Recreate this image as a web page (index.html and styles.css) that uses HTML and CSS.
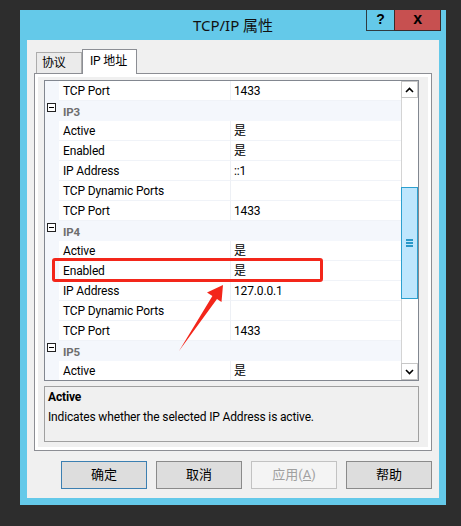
FILE: index.html
```html
<!DOCTYPE html>
<html>
<head>
<meta charset="utf-8">
<link rel="stylesheet" href="styles.css">
</head>
<body>
<div class="window">
  <div class="titlebar">
    <div></div>
    <div class="title">TCP/IP 属性</div>
    <div class="controls">
      <div class="btn-help">?</div>
      <div class="btn-close">x</div>
    </div>
  </div>
  <div class="client">
    <div class="tabs">
      <div class="tab">协议</div>
      <div class="tab active">IP 地址</div>
    </div>
    <div class="panel">
      <div class="grid">
        <div class="rows">
          <div class="row"><div class="margin"></div><div class="name">TCP Port</div><div class="value">1433</div></div>
          <div class="row cat"><div class="margin"><span class="minus"></span></div><div class="catname">IP3</div></div>
          <div class="row"><div class="margin"></div><div class="name">Active</div><div class="value">是</div></div>
          <div class="row"><div class="margin"></div><div class="name">Enabled</div><div class="value">是</div></div>
          <div class="row"><div class="margin"></div><div class="name">IP Address</div><div class="value">::1</div></div>
          <div class="row"><div class="margin"></div><div class="name">TCP Dynamic Ports</div><div class="value"></div></div>
          <div class="row"><div class="margin"></div><div class="name">TCP Port</div><div class="value">1433</div></div>
          <div class="row cat"><div class="margin"><span class="minus"></span></div><div class="catname">IP4</div></div>
          <div class="row"><div class="margin"></div><div class="name">Active</div><div class="value">是</div></div>
          <div class="row"><div class="margin"></div><div class="name">Enabled</div><div class="value">是</div></div>
          <div class="row"><div class="margin"></div><div class="name">IP Address</div><div class="value">127.0.0.1</div></div>
          <div class="row"><div class="margin"></div><div class="name">TCP Dynamic Ports</div><div class="value"></div></div>
          <div class="row"><div class="margin"></div><div class="name">TCP Port</div><div class="value">1433</div></div>
          <div class="row cat"><div class="margin"><span class="minus"></span></div><div class="catname">IP5</div></div>
          <div class="row"><div class="margin"></div><div class="name">Active</div><div class="value">是</div></div>
        </div>
        <div class="scrollbar">
          <div class="sb-btn">
            <svg width="9" height="6" viewBox="0 0 9 6"><polyline points="1,5 4.5,1.5 8,5" fill="none" stroke="#000" stroke-width="1.6"/></svg>
          </div>
          <div class="sb-track">
            <div class="thumb" style="margin-top:89px;height:112px">
              <span class="grip"></span><span class="grip"></span><span class="grip"></span>
            </div>
          </div>
          <div class="sb-btn">
            <svg width="9" height="6" viewBox="0 0 9 6"><polyline points="1,1 4.5,4.5 8,1" fill="none" stroke="#000" stroke-width="1.6"/></svg>
          </div>
        </div>
      </div>
      <div class="desc">
        <div class="desc-title">Active</div>
        <div class="desc-text">Indicates whether the selected IP Address is active.</div>
      </div>
    </div>
    <div class="buttons">
      <div class="button default">确定</div>
      <div class="button">取消</div>
      <div class="button disabled">应用(<u>A</u>)</div>
      <div class="button">帮助</div>
    </div>
  </div>
</div>
<div class="mark-box"></div>
<svg class="mark-arrow" width="461" height="526" viewBox="0 0 461 526">
  <polygon points="223,285 207,292.5 212.4,296 179,351 217,299 221.5,302" fill="#f3261a"/>
</svg>
</body>
</html>
```
FILE: styles.css
```css
* { box-sizing: border-box; }
html, body { margin: 0; padding: 0; }
body {
  background: #2d2d2d;
  width: 461px;
  height: 526px;
  padding: 10px 0 0 20px;
  font-family: Roboto, "Noto Sans CJK SC", sans-serif;
  font-size: 12px;
  letter-spacing: -0.15px;
  color: #000;
  position: relative;
  overflow: hidden;
}
.window {
  width: 426px;
  height: 495px;
  background: #64c9e9;
  display: flex;
  flex-direction: column;
}
.titlebar {
  height: 30px;
  display: grid;
  grid-template-columns: 1fr auto 1fr;
  align-items: start;
}
.title {
  font-size: 15px;
  line-height: 30px;
  color: #111;
  letter-spacing: 0;
  font-family: "Noto Sans", "Noto Sans CJK SC", sans-serif;
}
.controls {
  display: flex;
  justify-content: flex-end;
  padding-right: 5px;
}
.btn-help {
  width: 28px;
  height: 21px;
  border: 1px solid #2f3b40;
  border-top: none;
  border-right: none;
  text-align: center;
  font-weight: bold;
  font-size: 14px;
  line-height: 19px;
  font-family: "Liberation Sans", sans-serif;
}
.btn-close {
  width: 47px;
  height: 21px;
  background: #c75050;
  border: 1px solid #3a2a2a;
  border-top: none;
  text-align: center;
  font-weight: bold;
  font-size: 16px;
  line-height: 17px;
  font-family: "Liberation Sans", sans-serif;
}
.client {
  margin: 0 7px;
  height: 458px;
  background: #f0f0f0;
  padding-top: 9px;
}
.tabs {
  display: flex;
  align-items: flex-end;
  padding-left: 9px;
}
.tab {
  height: 21px;
  width: 46px;
  border: 1px solid #acacac;
  border-bottom: none;
  background: #ebebeb;
  padding-left: 5px;
  line-height: 20px;
  font-size: 12px;
}
.tab.active {
  width: 55px;
  height: 25px;
  margin-bottom: -1px;
  background: #fff;
  border-color: #8c8e94;
  padding-left: 7px;
  line-height: 22px;
  position: relative;
  z-index: 1;
}
.panel {
  margin-left: 7px;
  width: 398px;
  height: 378px;
  border: 1px solid #8c8e94;
  background: #f0f0f0;
  box-shadow: inset 0 0 0 3px #fff;
  padding: 6px 0 0 9px;
}
.grid {
  width: 375px;
  height: 301px;
  border: 1px solid #828790;
  background: #fff;
  display: flex;
  overflow: hidden;
}
.rows {
  flex: 1;
  display: flex;
  flex-direction: column;
}
.row {
  height: 20px;
  flex: none;
  display: grid;
  grid-template-columns: 14px 171px 1fr;
}
.margin {
  background: #f4f7fc;
}
.name {
  padding: 1px 0 0 4px;
  line-height: 18px;
  border-bottom: 1px solid #f0f3f8;
  white-space: nowrap;
}
.value {
  padding: 1px 0 0 3px;
  line-height: 18px;
  border-left: 1px solid #edf0f5;
  border-bottom: 1px solid #f0f3f8;
}
.row.cat {
  background: #f4f7fc;
}
.catname {
  grid-column: 2 / 4;
  padding-left: 4px;
  line-height: 22px;
  font-weight: bold;
  color: #6e6e6e;
  font-size: 11.5px;
}
.minus {
  display: block;
  width: 9px;
  height: 9px;
  margin: 2px 0 0 2px;
  border: 1px solid #222;
  background: #fff;
  position: relative;
}
.minus::after {
  content: "";
  position: absolute;
  left: 1px;
  top: 3px;
  width: 5px;
  height: 1px;
  background: #000;
}
.scrollbar {
  width: 17px;
  flex: none;
  display: flex;
  flex-direction: column;
  background: #fff;
}
.sb-btn {
  height: 17px;
  flex: none;
  border: 1px solid #c7c7c7;
  background: #fff;
  display: flex;
  align-items: center;
  justify-content: center;
}
.sb-track {
  flex: 1;
  border-left: 1px solid #d4d4d4;
}
.thumb {
  margin-left: -1px;
  background: #bee6fd;
  border: 1px solid #2ca0cf;
  display: flex;
  flex-direction: column;
  align-items: center;
  justify-content: center;
  gap: 1px;
}
.grip {
  display: block;
  width: 7px;
  height: 2px;
  background: #2a98c8;
}
.desc {
  margin-top: 5px;
  width: 375px;
  height: 56px;
  border: 1px solid #a0a0a0;
  background: #f0f0f0;
  padding: 1px 0 0 3px;
}
.desc-title {
  font-weight: bold;
  line-height: 18px;
}
.desc-text {
  margin-top: 2px;
  line-height: 18px;
}
.buttons {
  display: flex;
  justify-content: flex-end;
  gap: 9px;
  padding-right: 7px;
  margin-top: 10px;
}
.button {
  width: 86px;
  height: 28px;
  border: 1px solid #8a8a8a;
  background: #dddddd;
  text-align: center;
  line-height: 26px;
  font-size: 13px;
  letter-spacing: 0;
}
.button.default {
  border-color: #3c7fb1;
}
.button.disabled {
  border-color: #c2c2c2;
  background: #f4f4f4;
  color: #a0a0a0;
}
.mark-box {
  position: absolute;
  left: 52px;
  top: 258px;
  width: 271px;
  height: 24px;
  border: 3px solid #f3261a;
  border-radius: 3px;
}
.mark-arrow {
  position: absolute;
  left: 0;
  top: 0;
}
```
